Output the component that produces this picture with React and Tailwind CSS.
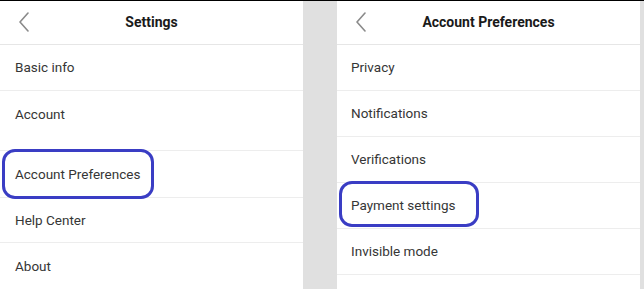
const leftRows = [
  { label: "Basic info", h: "h-[46px]" },
  { label: "Account", h: "h-[60px]", top: true },
  { label: "Account Preferences", h: "h-[47px]" },
  { label: "Help Center", h: "h-[45px]" },
  { label: "About", h: "h-[47px]", last: true },
];

const rightRows = [
  "Privacy",
  "Notifications",
  "Verifications",
  "Payment settings",
  "Invisible mode",
  "",
];

function BackIcon() {
  return (
    <svg width="12" height="20" viewBox="0 0 12 20" fill="none">
      <path d="M10 1 L2 10 L10 19" stroke="#8a8a8a" strokeWidth="1.6" strokeLinecap="round" strokeLinejoin="round" />
    </svg>
  );
}

function Header({ title }) {
  return (
    <div className="relative flex h-[44px] items-center justify-center border-b border-[#e6e6e6]">
      <div className="absolute left-[18px] top-[11px]">
        <BackIcon />
      </div>
      <span className="text-[14px] font-bold text-[#1a1a1a]">{title}</span>
    </div>
  );
}

export default function App() {
  return (
    <div
      className="flex h-[289px] w-[644px] overflow-hidden border-t border-black bg-[#e0e0e0]"
      style={{ fontFamily: "Roboto, 'Liberation Sans', sans-serif" }}
    >
      <div className="relative w-[303px] bg-white">
        <Header title="Settings" />
        {leftRows.map((row) => (
          <div
            key={row.label}
            className={`${row.h} flex px-[15px] text-[13.5px] text-[#363636] ${row.top ? "items-start pt-[13px]" : "items-center"} ${row.last ? "" : "border-b border-[#ededed]"}`}
          >
            {row.label}
          </div>
        ))}
        <div className="absolute left-[2px] top-[148px] h-[50px] w-[152px] rounded-[13px] border-[3px] border-[#3a3dc4]" />
      </div>
      <div className="w-[34px]" />
      <div className="relative w-[303px] bg-white">
        <Header title="Account Preferences" />
        {rightRows.map((label, i) => (
          <div
            key={i}
            className={`flex h-[46px] items-center px-[14px] text-[13.5px] text-[#363636] ${i < 5 ? "border-b border-[#ededed]" : ""}`}
          >
            {label}
          </div>
        ))}
        <div className="absolute left-[2px] top-[180px] h-[46px] w-[140px] rounded-[13px] border-[3px] border-[#3a3dc4]" />
      </div>
    </div>
  );
}
